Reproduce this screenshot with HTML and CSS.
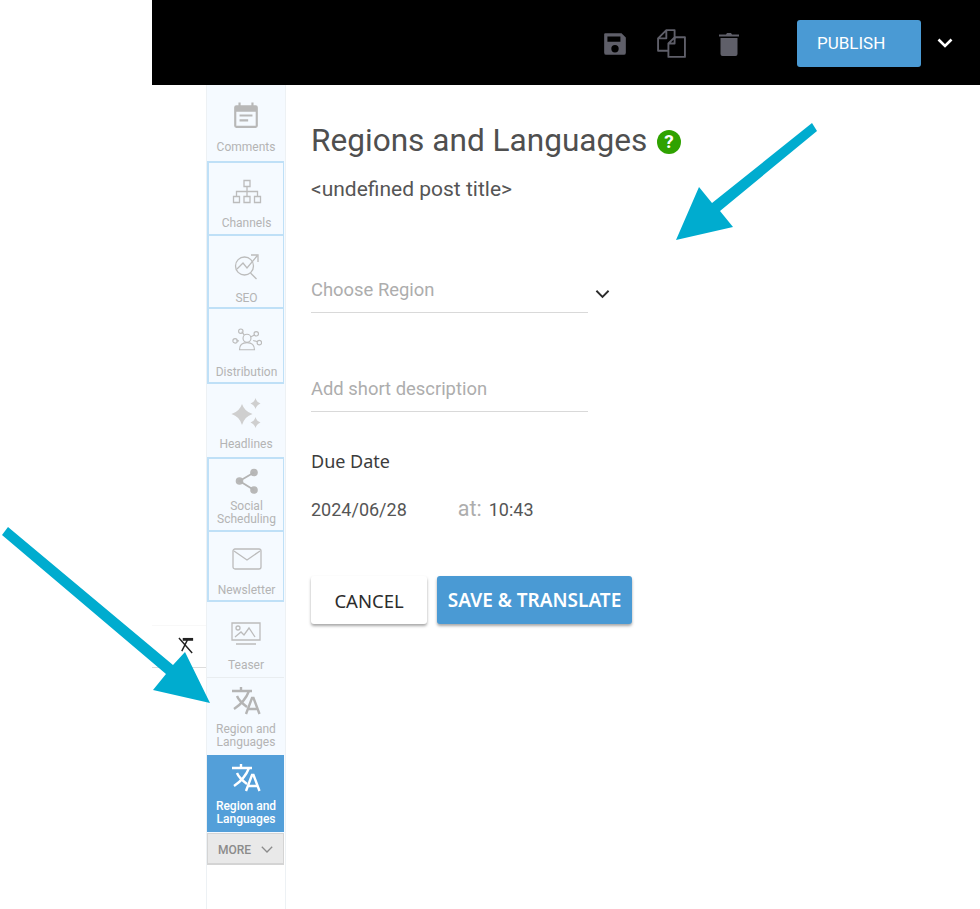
FILE: index.html
```html
<!DOCTYPE html>
<html lang="en">
<head>
<meta charset="utf-8">
<title>Regions and Languages</title>
<link rel="stylesheet" href="styles.css">
</head>
<body>
<div class="page">
  <header class="topbar">
    <div class="tools">
      <svg class="tool save" viewBox="0 0 24 24"><path d="M3 2h15l4 4v14a2 2 0 0 1-2 2H4a2 2 0 0 1-2-2V3a1 1 0 0 1 1-1zm2 3v5h12V5zm7 8a3.4 3.4 0 1 0 0 6.800a3.400 3.400 0 0 0 0-6.800z" fill-rule="evenodd"/></svg>
      <svg class="tool copy" viewBox="0 0 30 30"><path class="line" d="M12 22H2V10l8-8h8v9M10 2v8H2"/><path class="line" d="M12 28V15l6-6h10v19zM18 9v6h-6"/></svg>
      <svg class="tool trash" viewBox="0 0 20 26"><path d="M0 3.500h7l1-1.500h4l1 1.500h7v2H0zM1.500 7h17v16a2 2 0 0 1-2 2h-13a2 2 0 0 1-2-2z"/></svg>
    </div>
    <button class="publish">PUBLISH</button>
    <svg class="caret" viewBox="0 0 16 10"><path d="M1.500 1.500 8 8l6.500-6.500"/></svg>
  </header>
  <div class="body-row">
    <div class="left">
      <div class="strip">
        <svg class="clear" viewBox="0 0 18 18"><path class="thick" d="M5 2.500h11"/><path class="thin" d="M1 1l14 16M10 3 4 15"/></svg>
      </div>
    </div>
    <nav class="rail">
      <a class="item h76 first">
        <svg class="ic" viewBox="0 0 24 26"><path class="fill" d="M3 4h2V1.500h2V4h10V1.500h2V4h2a2 2 0 0 1 2 2v17a2 2 0 0 1-2 2H3a2 2 0 0 1-2-2V6a2 2 0 0 1 2-2zm0 6v13h18V10zm3 2.500h12v2H6zm0 4.500h8v2H6z" fill-rule="evenodd"/></svg>
        <span>Comments</span>
      </a>
      <a class="item boxed h75">
        <svg class="ic" viewBox="0 0 30 26"><path class="ln" d="M12 1.500h6v6h-6zM1.500 17.500h6v6h-6zM12 17.500h6v6h-6zM22.500 17.500h6v6h-6zM15 7.500v10M4.500 17.500v-5h21v5"/></svg>
        <span>Channels</span>
      </a>
      <a class="item boxed h73">
        <svg class="ic" viewBox="0 0 26 28"><circle class="ln" cx="10.500" cy="13" r="9"/><path class="ln" d="M3 16l6-6 4 5 10-12M17 2h7v7M16.500 20l6 6"/></svg>
        <span>SEO</span>
      </a>
      <a class="item boxed h75 dist">
        <svg class="ic" viewBox="0 0 34 26"><circle class="ln" cx="17" cy="11" r="4.500"/><path class="ln" d="M8.500 24c0-5 3-8 8.500-8s8.500 3 8.500 8zM11 3.500l3 4M26 7l-5 2.500M8 14h-3M29 15l-5-1.500"/><circle class="ln" cx="10" cy="3" r="2.500"/><circle class="ln" cx="27.500" cy="6" r="2.500"/><circle class="ln" cx="3.500" cy="14" r="2.500"/><circle class="ln" cx="31" cy="16" r="2.500"/></svg>
        <span>Distribution</span>
      </a>
      <a class="item h73 spark">
        <svg class="ic" viewBox="0 0 30 31"><path class="soft" d="M11 6Q13.500 13.500 21.500 16 13.500 18.500 11 27 8.500 18.500.500 16 8.500 13.500 11 6zM24.500 0Q25.500 4 29.500 5.500 25.500 7 24.500 11 23.500 7 19.500 5.500 23.500 4 24.500 0zM24.500 19Q25.500 23 29.500 24.500 25.500 26 24.500 30 23.500 26 19.500 24.500 23.500 23 24.500 19z"/></svg>
        <span>Headlines</span>
      </a>
      <a class="item boxed h75 tight">
        <svg class="ic share" viewBox="0 0 24 26"><circle cx="19" cy="4.500" r="3.800"/><circle cx="4.500" cy="13" r="3.800"/><circle cx="19" cy="22" r="3.800"/><path class="ln2" d="M19 4.500 4.500 13 19 22"/></svg>
        <span>Social Scheduling</span>
      </a>
      <a class="item boxed h70 mail">
        <svg class="ic" viewBox="0 0 30 22"><rect class="ln" x="1" y="1" width="28" height="20" rx="2"/><path class="ln" d="M2 3l13 9 13-9"/></svg>
        <span>Newsletter</span>
      </a>
      <a class="item h76 ruled">
        <svg class="ic" viewBox="0 0 30 26"><path class="ln" d="M1 1h28v17H1zM4 15l6-5 3 3 5-7 6 9M5 22h20"/><circle class="ln" cx="7" cy="6" r="2"/></svg>
        <span>Teaser</span>
      </a>
      <a class="item h77 lang">
        <svg class="ic" viewBox="0 0 28 28"><path class="tr" d="M0 4h20M9 0v4M17 4C14 12 8 18 2 22M5 9c2 5 6 8 10 11"/><path class="tr" d="M14 27l6-16h1.500l6 16M16 22h10"/></svg>
        <span>Region and Languages</span>
      </a>
      <a class="item h77 lang active">
        <svg class="ic" viewBox="0 0 28 28"><path class="tr" d="M0 4h20M9 0v4M17 4C14 12 8 18 2 22M5 9c2 5 6 8 10 11"/><path class="tr" d="M14 27l6-16h1.500l6 16M16 22h10"/></svg>
        <span>Region and Languages</span>
      </a>
      <a class="more">
        <span>MORE</span>
        <svg viewBox="0 0 12 7"><path d="M.8.8 6 6 11.200.8"/></svg>
      </a>
    </nav>
    <main class="content">
      <h1 class="title">Regions and Languages
        <svg class="help" viewBox="0 0 24 24"><circle cx="12" cy="12" r="12"/><text x="12" y="18" text-anchor="middle">?</text></svg>
      </h1>
      <p class="subtitle">&lt;undefined post title&gt;</p>
      <div class="select-row">
        <div class="field">Choose Region</div>
        <svg class="chev" viewBox="0 0 16 10"><path d="M1.500 1.500 8 8l6.500-6.500"/></svg>
      </div>
      <div class="field desc">Add short description</div>
      <div class="due">Due Date</div>
      <div class="when">
        <span class="date">2024/06/28</span>
        <span class="at">at:</span>
        <span class="time">10:43</span>
      </div>
      <div class="actions">
        <button class="btn cancel">CANCEL</button>
        <button class="btn translate">SAVE &amp; TRANSLATE</button>
      </div>
    </main>
  </div>
  <svg class="arrows" viewBox="0 0 980 909">
    <polygon points="8,527 173,665 185,652 210,703 153,690 166,674 2,535"/>
    <polygon points="812,123 712,203 699,187 676,240 733,227 720,211 817,131"/>
  </svg>
</div>
</body>
</html>
```
FILE: styles.css
```css
* { box-sizing: border-box; }
html, body { margin: 0; height: 100%; background: #fff; }
body { font-family: Roboto, sans-serif; overflow: hidden; }
.page { position: relative; width: 980px; height: 909px; display: flex; flex-direction: column; }

.topbar { margin-left: 152px; height: 85px; background: #000; display: flex; align-items: center; flex: none; padding-top: 2px; }
.tools { display: flex; align-items: center; margin-left: 450px; width: 195px; }
.tool { display: block; fill: #5f5f69; }
.save { width: 26px; height: 26px; margin-right: 28px; }
.copy { width: 31px; height: 31px; margin-right: 32px; }
.line { fill: none; stroke: #5f5f69; stroke-width: 1.800; stroke-linejoin: round; }
.trash { width: 20px; height: 26px; }
.publish { width: 124px; height: 47px; background: #4a9ad4; border: 0; border-radius: 3px; color: #fff; font: 400 17px Roboto, sans-serif; text-align: left; padding: 0 0 2px 20px; }
.caret { width: 16px; height: 10px; margin: -2px 0 0 16px; fill: none; stroke: #fff; stroke-width: 2.600; }

.body-row { display: flex; flex: 1; min-height: 0; }
.left { width: 206px; flex: none; padding: 540px 0 0 152px; }
.strip { height: 43px; border-top: 1px solid #f8f8f8; border-bottom: 1px solid #ddd; padding: 10px 0 0 26px; }
.clear { display: block; width: 17px; height: 19px; }
.thick { stroke: #222; stroke-width: 3; fill: none; }
.thin { stroke: #222; stroke-width: 1.500; fill: none; }

.rail { width: 80px; flex: none; background: linear-gradient(#f5faff 0 748px, #fff 748px); border-left: 1px solid #edf1f4; border-right: 1px solid #edf1f4; display: flex; flex-direction: column; }
.item { display: flex; flex-direction: column; align-items: center; color: #b4b4b4; font-size: 12px; line-height: 13px; text-align: center; padding: 16px 0 0 1px; flex: none; margin-right: 1px; }
.item span { display: block; width: 70px; }
.h70 { height: 70px; } .h73 { height: 73px; } .h75 { height: 75px; } .h76 { height: 76px; } .h77 { height: 77px; }
.boxed { border: 2px solid #bfe0f7; border-right-width: 1px; padding-top: 15px; }
.boxed + .boxed { border-top: 0; padding-top: 17px; }
.ruled { border-bottom: 1px solid #e9edf0; padding-top: 19px; }
.ic { display: block; height: 28px; width: 30px; margin-bottom: 11px; fill: #b8b8b8; }
.first .ic { margin-bottom: 12px; }
.ruled .ic { margin-bottom: 10px; }
.dist .ic { margin-bottom: 12px; }
.spark { padding-top: 14px; }
.spark .ic { height: 31px; margin-bottom: 9px; }
.ln { fill: none; stroke: #bcbcbc; stroke-width: 1.300; }
.ln2 { fill: none; stroke: #b4b4b4; stroke-width: 1.800; }
.soft { fill: #cfcfcf; }
.boxed.tight { padding-top: 9px; }
.boxed .share { height: 26px; margin-bottom: 6px; }
.boxed.mail { padding-top: 13px; }
.lang { padding-top: 9px; }
.lang .ic { margin-bottom: 8px; }
.tr { fill: none; stroke: #b4b4b4; stroke-width: 2.400; }
.active { background: #539fd9; color: #fff; font-weight: 500; }
.active .tr { stroke: #fff; }
.more { margin: 1px 1px 0 0; height: 32px; background: #e9e9e9; border: 1px solid #d4d4d4; border-bottom-width: 2px; display: flex; align-items: center; justify-content: center; gap: 10px; padding-top: 2px; font-size: 12px; font-weight: 500; color: #8b8b8b; }
.more svg { width: 12px; height: 7px; fill: none; stroke: #8b8b8b; stroke-width: 1.300; }

.content { padding: 37px 0 0 25px; flex: 1; }
.title { margin: 0; display: flex; align-items: center; gap: 10px; font-size: 31.600px; font-weight: 400; line-height: 38px; color: #4f4f4f; }
.help { width: 24px; height: 24px; flex: none; fill: #2fa200; margin-top: 2px; }
.help text { fill: #fff; font: 700 19px Roboto, sans-serif; }
.subtitle { margin: 17px 0 0; font-size: 21px; line-height: 24px; color: #555; }
.select-row { display: flex; align-items: center; margin-top: 77px; gap: 7px; }
.field { width: 277px; height: 35px; border-bottom: 1px solid #d9d9d9; font-size: 18.400px; line-height: 24px; color: #adadad; }
.chev { width: 15px; height: 10px; fill: none; stroke: #2b2b2b; stroke-width: 2; margin-top: -3px; }
.desc { margin-top: 64px; }
.due { margin-top: 37px; font-family: "Noto Sans", sans-serif; font-size: 18px; line-height: 24px; color: #3c3c3c; }
.when { display: flex; align-items: baseline; margin-top: 24px; font-size: 18px; line-height: 24px; color: #555; }
.at { margin-left: 51px; font-size: 21.500px; color: #adadad; }
.time { margin-left: 7px; }
.actions { display: flex; gap: 10px; margin-top: 54px; }
.btn { height: 48px; border: 0; border-radius: 3px; font-family: "Noto Sans", sans-serif; font-size: 18.500px; padding: 0; white-space: nowrap; box-shadow: 0 2px 3px rgba(0,0,0,.35); }
.cancel { width: 116px; background: #fff; color: #2c2c2c; }
.translate { width: 195px; background: #4a9ad4; color: #fff; font-size: 19px; font-weight: 600; }

.arrows { position: absolute; inset: 0; width: 980px; height: 909px; fill: #00accf; pointer-events: none; }
```
